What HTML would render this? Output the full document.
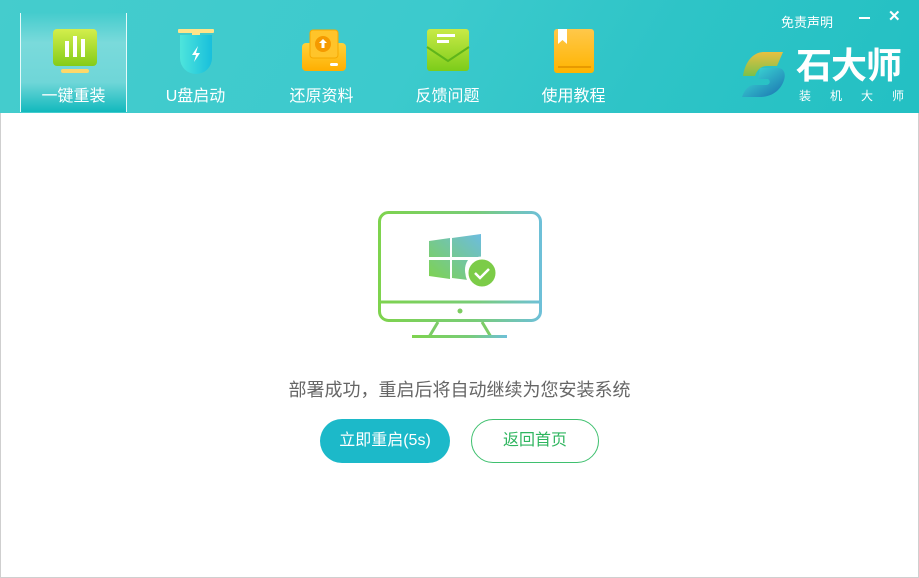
<!DOCTYPE html>
<html><head><meta charset="utf-8"><style>
*{margin:0;padding:0;box-sizing:border-box}
body{width:919px;height:578px;overflow:hidden;background:#fff;font-family:"Liberation Sans","Noto Sans CJK SC",sans-serif;position:relative}
.hdr{position:absolute;left:0;top:0;width:919px;height:113px;background:linear-gradient(120deg,#45cccd 0%,#3ccacd 45%,#2ec4c7 70%,#23c0c3 100%)}
.tab{position:absolute;top:13px;width:107px;height:99px;text-align:center;color:#fff;font-size:16px}
.tab .lbl{position:absolute;top:69px;left:0;width:100%}
.tab.act{background:linear-gradient(#45cccd 0%,#7adadb 30%,#6fd6d8 70%,#12b9bd 100%);border-left:1px solid #e5fafa;border-right:1px solid #e5fafa}
.body{position:absolute;left:0;top:113px;width:919px;height:465px;border:1px solid #cfcfcf;border-top:none;background:#fff}
.msg{position:absolute;top:376px;left:0;width:919px;text-align:center;font-size:18px;color:#666}
.b1{position:absolute;left:320px;top:419px;width:130px;height:44px;border-radius:22px;background:#1cb9c9;color:#fff;font-size:16px;text-align:center;line-height:44px}
.b2{position:absolute;left:471px;top:419px;width:128px;height:44px;border-radius:22px;border:1px solid #3fc06f;color:#2fb55f;font-size:16px;text-align:center;line-height:42px}
</style></head><body>
<div class="hdr">
 <div class="tab act" style="left:20px"><svg width="107" height="70"><defs><linearGradient id="g1" x1="0" y1="0" x2="0" y2="1"><stop offset="0" stop-color="#d4ee4c"/><stop offset="1" stop-color="#84cc1a"/></linearGradient></defs><rect x="32" y="16" width="44" height="37" rx="4" fill="url(#g1)"/><rect x="44" y="28" width="4" height="16" fill="#fff"/><rect x="52" y="23" width="4" height="21" fill="#fff"/><rect x="60" y="26" width="4" height="18" fill="#fff"/><rect x="40" y="56" width="28" height="4" rx="2" fill="#ffd86a"/></svg><div class="lbl">一键重装</div></div>
 <div class="tab" style="left:142px"><svg width="107" height="70"><defs><linearGradient id="g2" x1="0" y1="0" x2="1" y2="0"><stop offset="0" stop-color="#4ee5dc"/><stop offset="1" stop-color="#18bfdc"/></linearGradient></defs><rect x="36" y="16" width="36" height="4" rx="1" fill="#ffe48a"/><rect x="50" y="19" width="8" height="4" fill="#ffe48a"/><path d="M38 22h32v23a16 16 0 0 1-32 0z" fill="url(#g2)"/><path d="M56 33l-6 9h4l-2 7 6-9h-4z" fill="#fff"/></svg><div class="lbl">U盘启动</div></div>
 <div class="tab" style="left:268px"><svg width="107" height="70"><defs><linearGradient id="g3" x1="0" y1="0" x2="0" y2="1"><stop offset="0" stop-color="#ffd23a"/><stop offset="1" stop-color="#ffae00"/></linearGradient></defs><rect x="34" y="30" width="44" height="28" rx="4" fill="url(#g3)"/><rect x="42" y="17" width="28" height="28" rx="3" fill="#ffc42a" stroke="#f5a800" stroke-width="1"/><circle cx="55" cy="31" r="8" fill="#f59a00"/><path d="M55 26l-4 4h2.5v5h3v-5h2.5z" fill="#fff"/><rect x="62" y="50" width="8" height="3" rx="1.5" fill="#fff"/></svg><div class="lbl">还原资料</div></div>
 <div class="tab" style="left:394px"><svg width="107" height="70"><defs><linearGradient id="g4" x1="0" y1="0" x2="0" y2="1"><stop offset="0" stop-color="#c8ea46"/><stop offset="1" stop-color="#7ccc1a"/></linearGradient></defs><rect x="33" y="16" width="42" height="42" rx="3" fill="url(#g4)"/><path d="M33 34l21 14 21-14" fill="none" stroke="#5fb51a" stroke-width="2"/><rect x="43" y="21" width="18" height="3" fill="#fff"/><rect x="43" y="27" width="12" height="3" fill="#fff"/></svg><div class="lbl">反馈问题</div></div>
 <div class="tab" style="left:520px"><svg width="107" height="70"><defs><linearGradient id="g5" x1="0" y1="0" x2="0" y2="1"><stop offset="0" stop-color="#ffc84a"/><stop offset="1" stop-color="#ffb400"/></linearGradient></defs><rect x="34" y="16" width="40" height="44" rx="3" fill="url(#g5)"/><path d="M38 16h9v15l-4.5-4-4.5 4z" fill="#fff"/><rect x="38" y="53" width="33" height="2" fill="#e89a00"/></svg><div class="lbl">使用教程</div></div>
 <div style="position:absolute;left:781px;top:12px;color:#fff;font-size:13px">免责声明</div>
 <div style="position:absolute;left:859px;top:17px;width:11px;height:2px;background:#fff"></div>
 <div style="position:absolute;left:888px;top:7px;color:#fff;font-size:15px;font-weight:bold">✕</div>
 <svg style="position:absolute;left:740px;top:50px" width="50" height="50"><defs><linearGradient id="l1" x1="0" y1="0" x2="0" y2="1"><stop offset="0" stop-color="#e8c040"/><stop offset="1" stop-color="#7cc04a"/></linearGradient><linearGradient id="l2" x1="0" y1="0" x2="1" y2="1"><stop offset="0" stop-color="#40e6d8"/><stop offset="1" stop-color="#1a6fb0"/></linearGradient></defs><path d="M24 2h19l-6 14h-10c-6 0-10 4-12 10h-12c2-14 10-24 21-24z" fill="url(#l1)"/><path d="M20 18h18c6 0 8 6 6 12-3 10-12 17-24 17h-18c2-6 6-12 12-12h12c4 0 5-4 2-6h-10z" fill="url(#l2)"/></svg>
 <div style="position:absolute;left:796px;top:45px;color:#fff;font-size:36px;font-weight:bold;letter-spacing:-1px;line-height:42px">石大师</div>
 <div style="position:absolute;left:799px;top:87px;color:#fff;font-size:12px;letter-spacing:19px;white-space:nowrap">装机大师</div>
</div>
<div class="body"></div>
<svg style="position:absolute;left:370px;top:205px" width="180" height="140"><defs><linearGradient id="m" x1="0" y1="0" x2="1" y2="0"><stop offset="0" stop-color="#7ed34e"/><stop offset="0.6" stop-color="#78cc78"/><stop offset="1" stop-color="#6ec0d8"/></linearGradient><linearGradient id="w" x1="0" y1="1" x2="1" y2="0"><stop offset="0" stop-color="#7ed34e"/><stop offset="1" stop-color="#6cbce0"/></linearGradient></defs>
<rect x="9.5" y="7.5" width="161" height="108" rx="9" fill="none" stroke="url(#m)" stroke-width="3"/>
<rect x="9" y="95.5" width="162" height="3" fill="url(#m)"/>
<circle cx="90" cy="106" r="2.5" fill="#7ccc60"/>
<path d="M68 117l-9 15M112 117l9 15" stroke="#7ccc66" stroke-width="3"/>
<rect x="42" y="130" width="95" height="3" fill="url(#m)"/>
<path d="M59 36l21-3v19h-21zM82 33l29-4v23h-29zM59 55h21v19l-21-3zM82 55h16a18 18 0 0 0 0 20l-16-2z" fill="url(#w)"/>
<circle cx="112" cy="68" r="15" fill="#7ccc48" stroke="#fff" stroke-width="3"/>
<path d="M105 68l5 5 9-9" fill="none" stroke="#fff" stroke-width="2.5"/>
</svg>
<div class="msg">部署成功，重启后将自动继续为您安装系统</div>
<div class="b1">立即重启(5s)</div>
<div class="b2">返回首页</div>
</body></html>
